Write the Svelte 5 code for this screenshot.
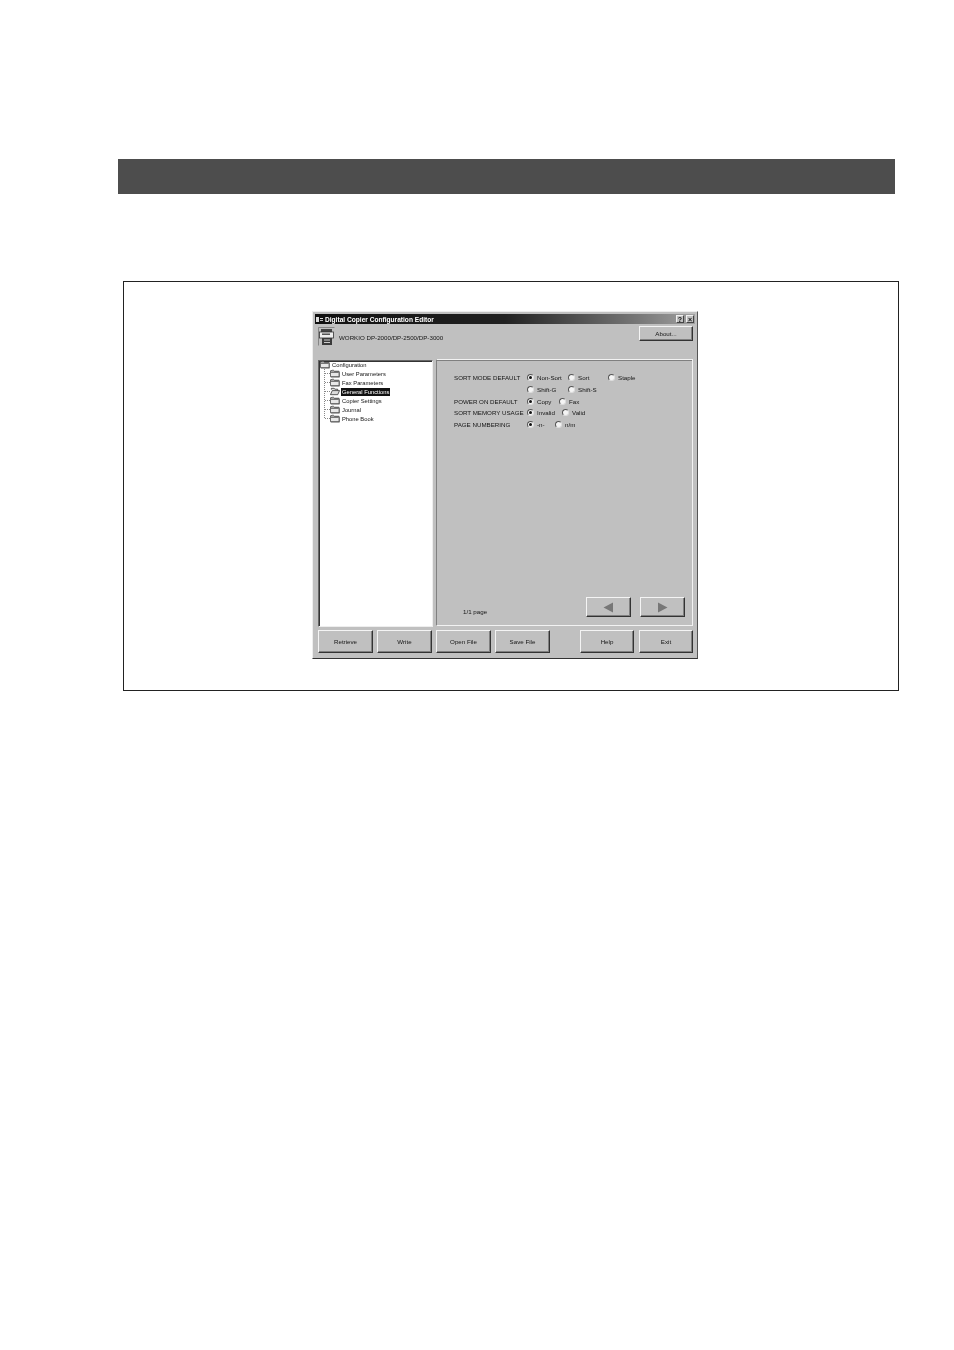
<script lang="ts">
  const children = [
    { label: 'User Parameters', open: false },
    { label: 'Fax Parameters', open: false },
    { label: 'General Functions', open: true },
    { label: 'Copier Settings', open: false },
    { label: 'Journal', open: false },
    { label: 'Phone Book', open: false }
  ];

  // second value = pitch to the next radio in the row, 0 for the last one
  const rows = [
    { label: 'SORT MODE DEFAULT', options: [['Non-Sort', 41], ['Sort', 40], ['Staple', 0]], selected: 0 },
    { label: '', options: [['Shift-G', 41], ['Shift-S', 0]], selected: -1 },
    { label: 'POWER ON DEFAULT', options: [['Copy', 32], ['Fax', 0]], selected: 0 },
    { label: 'SORT MEMORY USAGE', options: [['Invalid', 35], ['Valid', 0]], selected: 0 },
    { label: 'PAGE NUMBERING', options: [['-n-', 28], ['n/m', 0]], selected: 0 }
  ];

  const leftButtons = ['Retrieve', 'Write', 'Open File', 'Save File'];
  const rightButtons = ['Help', 'Exit'];
</script>

{#snippet folder(open: boolean)}
  <svg class="folder" viewBox="0 0 11 9" width="10" height="9" aria-hidden="true">
    {#if open}
      <path d="M1.5 2.5 L1.5 1 L4.5 1 L5.5 2 L8.5 2 L8.5 3.5" fill="#ddd" stroke="#222" stroke-width="0.8" />
      <path d="M0.5 8 L2.5 3.5 L10.5 3.5 L8.5 8 Z" fill="#ddd" stroke="#222" stroke-width="0.8" />
    {:else}
      <path d="M0.5 8 L0.5 1.5 L3.5 0.8 L5 2 L10 2 L10 8 Z" fill="#e8e8e8" stroke="#333" stroke-width="0.8" />
      <path d="M1 3 L9.5 3" stroke="#222" stroke-width="1" />
      <path d="M10.5 3 L10.5 8.5 L1 8.5" stroke="#555" stroke-width="0.7" fill="none" />
    {/if}
  </svg>
{/snippet}

<div class="page">
  <div class="banner"></div>
  <div class="frame">
    <div class="window">
      <div class="titlebar">
        <svg class="sysicon" viewBox="0 0 7 7" width="7" height="7" aria-hidden="true">
          <rect x="0" y="1" width="3" height="5" fill="#ddd" />
          <rect x="4" y="2" width="3" height="1" fill="#ddd" />
          <rect x="4" y="4" width="3" height="1" fill="#bbb" />
        </svg>
        <span class="title">Digital Copier Configuration Editor</span>
        <div class="caption-btns">
          <span class="caption-btn">?</span>
          <span class="caption-btn close">×</span>
        </div>
      </div>

      <div class="model-row">
        <svg class="copier" viewBox="0 0 17 19" width="17" height="19" aria-hidden="true">
          <path d="M0.5 18.5 V0.5 H16.5" fill="none" stroke="#777" stroke-width="0.8" />
          <rect x="3" y="2" width="11" height="3" fill="#444" />
          <rect x="1.5" y="5" width="14" height="6" fill="#eee" stroke="#333" stroke-width="0.8" />
          <rect x="4" y="6.5" width="8" height="1.4" fill="#444" />
          <rect x="4" y="11" width="10" height="7" fill="#3a3a3a" />
          <rect x="6" y="12.5" width="6" height="1" fill="#ccc" />
          <rect x="6" y="15" width="6" height="1" fill="#ccc" />
        </svg>
        <span class="model">WORKIO DP-2000/DP-2500/DP-3000</span>
        <button class="btn about">About...</button>
      </div>

      <div class="body">
        <div class="tree">
          <div class="node root">
            {@render folder(false)}
            <span>Configuration</span>
          </div>
          <div class="branch">
            {#each children as c}
              <div class="node child">
                <span class="tick"></span>
                {@render folder(c.open)}
                <span class="node-label" class:selected={c.open}>{c.label}</span>
              </div>
            {/each}
          </div>
        </div>

        <div class="panel">
          <div class="settings">
            {#each rows as row}
              <div class="setting">
                <span class="setting-label">{row.label}</span>
                <div class="options">
                  {#each row.options as [text, pitch], i}
                    <label class="option" style={pitch ? `width: ${pitch}px` : ''}>
                      <span class="radio" class:on={row.selected === i}></span>
                      <span>{text}</span>
                    </label>
                  {/each}
                </div>
              </div>
            {/each}
          </div>
          <div class="pager">
            <span class="page-count">1/1 page</span>
            <button class="btn nav" aria-label="Previous page">
              <svg viewBox="0 0 11 11" width="11" height="11"><path d="M10 0.5 V10.5 L0.5 5.5 Z" fill="#777" /></svg>
            </button>
            <button class="btn nav" aria-label="Next page">
              <svg viewBox="0 0 11 11" width="11" height="11"><path d="M1 0.5 V10.5 L10.5 5.5 Z" fill="#777" /></svg>
            </button>
          </div>
        </div>
      </div>

      <div class="actions">
        <div class="group">
          {#each leftButtons as b}
            <button class="btn action">{b}</button>
          {/each}
        </div>
        <div class="group right">
          {#each rightButtons as b}
            <button class="btn action">{b}</button>
          {/each}
        </div>
      </div>
    </div>
  </div>
</div>

<style>
  :global(body) {
    margin: 0;
    background: #fff;
  }

  .page {
    width: 954px;
    height: 1350px;
    padding-top: 159px;
    box-sizing: border-box;
    overflow: hidden;
  }

  .banner {
    width: 777px;
    height: 35px;
    margin-left: 118px;
    background: #4d4d4d;
  }

  .frame {
    width: 776px;
    height: 410px;
    margin: 87px 0 0 123px;
    padding: 29px 0 0 188px;
    box-sizing: border-box;
    border: 1px solid #222;
  }

  .window {
    width: 386px;
    height: 348px;
    box-sizing: border-box;
    padding: 2px;
    background: #c0c0c0;
    border-bottom: 1px solid #333;
    border-right: 1px solid #555;
    border-top: 1px solid #eee;
    border-left: 1px solid #eee;
    display: flex;
    flex-direction: column;
    font-family: 'Liberation Sans', Arial, sans-serif;
    font-size: 6.2px;
    color: #151515;
    filter: blur(0.35px);
  }

  .titlebar {
    height: 10px;
    flex: none;
    display: flex;
    align-items: center;
    padding: 0 1px;
    background: linear-gradient(90deg, #111 0%, #222 50%, #777 85%, #a0a0a0 100%);
    color: #fff;
  }

  .sysicon {
    margin-right: 2px;
  }

  .title {
    font-weight: bold;
    font-size: 6.6px;
  }

  .caption-btns {
    margin-left: auto;
    display: flex;
    gap: 2px;
  }

  .caption-btn {
    width: 8px;
    height: 8px;
    box-sizing: border-box;
    background: #c0c0c0;
    color: #111;
    font-weight: bold;
    font-size: 7px;
    line-height: 7px;
    text-align: center;
    border: 1px solid;
    border-color: #f0f0f0 #444 #444 #f0f0f0;
  }

  .model-row {
    height: 35px;
    flex: none;
    box-sizing: border-box;
    display: flex;
    align-items: flex-start;
    padding: 2px 2px 0 3px;
  }

  .copier {
    margin-top: 1px;
    margin-right: 4px;
  }

  .model {
    margin-top: 8px;
  }

  .btn {
    padding: 0;
    box-sizing: border-box;
    background: #c0c0c0;
    font: inherit;
    color: inherit;
    border: 1px solid;
    border-color: #f4f4f4 #333 #333 #f4f4f4;
    box-shadow: inset -1px -1px 0 #808080;
    display: flex;
    align-items: center;
    justify-content: center;
  }

  .about {
    margin-left: auto;
    width: 54px;
    height: 15px;
  }

  .body {
    height: 268px;
    flex: none;
    display: flex;
    padding: 0 2px 0 3px;
    gap: 3px;
  }

  .tree {
    width: 115px;
    flex: none;
    margin-top: 1px;
    box-sizing: border-box;
    background: #fff;
    border: 1px solid;
    border-color: #666 #eee #eee #666;
    box-shadow: inset 1px 1px 0 #333;
    padding: 0 0 0 1px;
    font-size: 5.8px;
  }

  .node {
    height: 9px;
    display: flex;
    align-items: center;
    white-space: nowrap;
  }

  .root {
    margin-top: -1px;
  }

  .root .folder {
    margin-right: 2px;
  }

  .branch {
    margin-left: 4px;
    border-left: 1px dotted #888;
    height: 49px;
  }

  .child .tick {
    width: 5px;
    border-top: 1px dotted #888;
  }

  .child .folder {
    margin-right: 1px;
  }

  .node-label {
    padding: 0 1px;
    line-height: 8px;
  }

  .selected {
    background: #111;
    color: #fff;
  }

  .panel {
    width: 257px;
    flex: none;
    box-sizing: border-box;
    margin-bottom: 1px;
    border: 1px solid;
    border-color: #f2f2f2 #f2f2f2 #f2f2f2 #808080;
    box-shadow: inset 0 1px 0 #808080;
    padding: 12px 7px 8px 17px;
    display: flex;
    flex-direction: column;
  }

  .settings {
    display: flex;
    flex-direction: column;
  }

  .setting {
    height: 11.7px;
    display: flex;
    align-items: center;
    white-space: nowrap;
  }

  .setting-label {
    width: 73px;
    flex: none;
  }

  .options {
    display: flex;
    align-items: center;
  }

  .option {
    display: flex;
    align-items: center;
    gap: 3px;
    white-space: nowrap;
  }

  .radio {
    width: 7px;
    height: 7px;
    flex: none;
    box-sizing: border-box;
    border-radius: 50%;
    background: #f4f4f4;
    border: 1px solid;
    border-color: #555 #ddd #ddd #555;
    position: relative;
  }

  .radio.on::after {
    content: '';
    position: absolute;
    left: 1px;
    top: 1px;
    width: 3px;
    height: 3px;
    border-radius: 50%;
    background: #111;
  }

  .pager {
    margin-top: auto;
    display: flex;
    align-items: flex-end;
    gap: 9px;
  }

  .page-count {
    margin: 0 auto 0 9px;
    padding-bottom: 2px;
  }

  .nav {
    width: 45px;
    height: 20px;
  }

  .actions {
    display: flex;
    justify-content: space-between;
    padding: 3px 2px 0 3px;
  }

  .group {
    display: flex;
    gap: 4px;
  }

  .group.right {
    gap: 5px;
  }

  .action {
    width: 55px;
    height: 23px;
  }

  .right .action {
    width: 54px;
  }
</style>
